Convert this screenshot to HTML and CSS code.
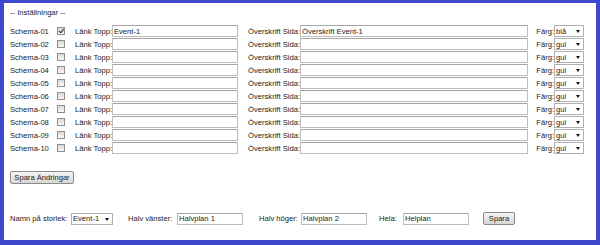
FILE: index.html
```html
<!DOCTYPE html>
<html lang="sv">
<head>
    <meta charset="UTF-8">
    <meta name="viewport" content="width=device-width, initial-scale=1.0">
    <title>Inställningar</title>
    <link rel="stylesheet" href="styles.css">
</head>
<body>
    <div class="panel">
        <div class="title">-- Inställningar --</div>
        <form id="schema-form" class="schemas">
            <div class="row">
                <span class="name">Schema-01</span>
                <span class="cb-cell"><input type="checkbox" checked></span>
                <label class="lbl">Länk Topp:</label>
                <input type="text" class="txt" value="Event-1">
                <label class="lbl">Överskrift Sida:</label>
                <input type="text" class="txt" value="Överskrift Event-1">
                <label class="lbl">Färg:</label>
                <span class="sel"><select><option selected>blå</option><option>gul</option><option>röd</option></select></span>
            </div>
            <div class="row">
                <span class="name">Schema-02</span>
                <span class="cb-cell"><input type="checkbox"></span>
                <label class="lbl">Länk Topp:</label>
                <input type="text" class="txt">
                <label class="lbl">Överskrift Sida:</label>
                <input type="text" class="txt">
                <label class="lbl">Färg:</label>
                <span class="sel"><select><option>blå</option><option selected>gul</option><option>röd</option></select></span>
            </div>
            <div class="row">
                <span class="name">Schema-03</span>
                <span class="cb-cell"><input type="checkbox"></span>
                <label class="lbl">Länk Topp:</label>
                <input type="text" class="txt">
                <label class="lbl">Överskrift Sida:</label>
                <input type="text" class="txt">
                <label class="lbl">Färg:</label>
                <span class="sel"><select><option>blå</option><option selected>gul</option><option>röd</option></select></span>
            </div>
            <div class="row">
                <span class="name">Schema-04</span>
                <span class="cb-cell"><input type="checkbox"></span>
                <label class="lbl">Länk Topp:</label>
                <input type="text" class="txt">
                <label class="lbl">Överskrift Sida:</label>
                <input type="text" class="txt">
                <label class="lbl">Färg:</label>
                <span class="sel"><select><option>blå</option><option selected>gul</option><option>röd</option></select></span>
            </div>
            <div class="row">
                <span class="name">Schema-05</span>
                <span class="cb-cell"><input type="checkbox"></span>
                <label class="lbl">Länk Topp:</label>
                <input type="text" class="txt">
                <label class="lbl">Överskrift Sida:</label>
                <input type="text" class="txt">
                <label class="lbl">Färg:</label>
                <span class="sel"><select><option>blå</option><option selected>gul</option><option>röd</option></select></span>
            </div>
            <div class="row">
                <span class="name">Schema-06</span>
                <span class="cb-cell"><input type="checkbox"></span>
                <label class="lbl">Länk Topp:</label>
                <input type="text" class="txt">
                <label class="lbl">Överskrift Sida:</label>
                <input type="text" class="txt">
                <label class="lbl">Färg:</label>
                <span class="sel"><select><option>blå</option><option selected>gul</option><option>röd</option></select></span>
            </div>
            <div class="row">
                <span class="name">Schema-07</span>
                <span class="cb-cell"><input type="checkbox"></span>
                <label class="lbl">Länk Topp:</label>
                <input type="text" class="txt">
                <label class="lbl">Överskrift Sida:</label>
                <input type="text" class="txt">
                <label class="lbl">Färg:</label>
                <span class="sel"><select><option>blå</option><option selected>gul</option><option>röd</option></select></span>
            </div>
            <div class="row">
                <span class="name">Schema-08</span>
                <span class="cb-cell"><input type="checkbox"></span>
                <label class="lbl">Länk Topp:</label>
                <input type="text" class="txt">
                <label class="lbl">Överskrift Sida:</label>
                <input type="text" class="txt">
                <label class="lbl">Färg:</label>
                <span class="sel"><select><option>blå</option><option selected>gul</option><option>röd</option></select></span>
            </div>
            <div class="row">
                <span class="name">Schema-09</span>
                <span class="cb-cell"><input type="checkbox"></span>
                <label class="lbl">Länk Topp:</label>
                <input type="text" class="txt">
                <label class="lbl">Överskrift Sida:</label>
                <input type="text" class="txt">
                <label class="lbl">Färg:</label>
                <span class="sel"><select><option>blå</option><option selected>gul</option><option>röd</option></select></span>
            </div>
            <div class="row">
                <span class="name">Schema-10</span>
                <span class="cb-cell"><input type="checkbox"></span>
                <label class="lbl">Länk Topp:</label>
                <input type="text" class="txt">
                <label class="lbl">Överskrift Sida:</label>
                <input type="text" class="txt">
                <label class="lbl">Färg:</label>
                <span class="sel"><select><option>blå</option><option selected>gul</option><option>röd</option></select></span>
            </div>
        </form>
        <button type="button" class="btn btn-save-all">Spara Ändringar</button>
        <div class="sizes">
            <label class="size-lbl l-name">Namn på storlek:</label>
            <span class="sel sel-event"><select><option selected>Event-1</option><option>Event-2</option></select></span>
            <label class="size-lbl l-left">Halv vänster:</label>
            <input type="text" class="txt size-txt" value="Halvplan 1">
            <label class="size-lbl l-right">Halv höger:</label>
            <input type="text" class="txt size-txt" value="Halvplan 2">
            <label class="size-lbl l-full">Hela:</label>
            <input type="text" class="txt size-txt" value="Helplan">
            <button type="button" class="btn btn-save">Spara</button>
        </div>
    </div>
</body>
</html>
```

FILE: styles.css
```css
body {
    margin: 0;
    font-family: "Liberation Sans", Arial, sans-serif;
    font-size: 7.6px;
    color: #222;
    background: #fff;
}

.panel {
    box-sizing: border-box;
    height: 245px;
    border-style: solid;
    border-color: #3f48cc;
    border-width: 3px 4px 5px 4px;
    padding: 3px 0 0 6px;
}

.title {
    height: 13px;
    line-height: 13px;
    margin-bottom: 6px;
}

.schemas {
    margin: 0;
}

.row {
    display: grid;
    grid-template-columns: 46px 18px 38px 126px 62px 228px 26px 30px;
    align-items: center;
    height: 12px;
    margin-bottom: 1px;
}

.lbl {
    text-align: right;
    white-space: nowrap;
}

.cb-cell {
    display: flex;
    align-items: center;
}

.cb-cell input {
    -webkit-appearance: none;
    appearance: none;
    position: relative;
    box-sizing: border-box;
    width: 8px;
    height: 8px;
    margin: 0 0 0 1px;
    border: 1px solid #8f8f8f;
    background: linear-gradient(#d8d8d8, #f8f8f8);
}

.cb-cell input:checked::after {
    content: "";
    position: absolute;
    left: 1.5px;
    top: 0;
    width: 2px;
    height: 3.5px;
    border-right: 1.5px solid #222;
    border-bottom: 1.5px solid #222;
    transform: rotate(40deg);
}

.txt {
    box-sizing: border-box;
    height: 12px;
    width: 100%;
    margin: 0;
    padding: 0 1px;
    border: 1px solid #bdbdbd;
    border-top-color: #a5a5a5;
    border-radius: 0;
    font-family: inherit;
    font-size: 7.6px;
    color: #222;
    outline: none;
}

.sel {
    position: relative;
    display: inline-block;
    height: 12px;
}

.sel select {
    -webkit-appearance: none;
    appearance: none;
    box-sizing: border-box;
    width: 30px;
    height: 12px;
    margin: 0;
    padding: 0 0 0 1px;
    border: 1px solid #b0b0b0;
    border-radius: 0;
    background: #fff;
    font-family: inherit;
    font-size: 7.6px;
    color: #222;
    display: block;
}

.sel::after {
    content: "";
    position: absolute;
    right: 4px;
    top: 5px;
    border-left: 2px solid transparent;
    border-right: 2px solid transparent;
    border-top: 3px solid #111;
}

.btn {
    display: block;
    box-sizing: border-box;
    height: 13px;
    margin: 0;
    padding: 0;
    border: 1px solid #8a8a8a;
    border-radius: 2px;
    background: linear-gradient(#f4f4f4, #e6e6e6 50%, #d6d6d6);
    font-family: inherit;
    font-size: 7.6px;
    color: #222;
}

.btn-save-all {
    width: 64px;
    margin-top: 17px;
}

.sizes {
    display: flex;
    align-items: center;
    height: 13px;
    margin-top: 28px;
}

.size-lbl {
    white-space: nowrap;
}

.l-name {
    width: 61px;
}

.sel-event select {
    width: 42px;
}

.l-left {
    width: 49px;
    margin-left: 15px;
}

.l-right {
    width: 42px;
    margin-left: 16px;
}

.l-full {
    width: 24px;
    margin-left: 12px;
}

.size-txt {
    width: 66px;
}

.btn-save {
    width: 32px;
    margin-left: 14px;
}
```
